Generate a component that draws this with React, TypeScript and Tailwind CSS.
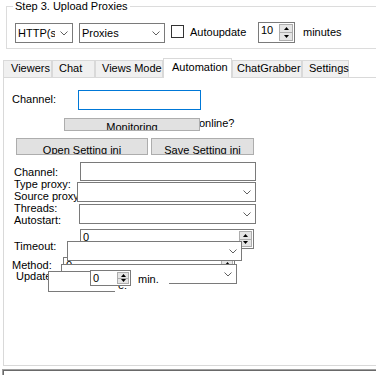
import React from 'react';

function Chevron() {
  return (
    <svg width="8" height="5" viewBox="0 0 8 5">
      <polyline points="0.5,0.5 4,4 7.5,0.5" fill="none" stroke="#606060" strokeWidth="1" />
    </svg>
  );
}

function Combo({ className, text }: { className: string; text?: string }) {
  return (
    <div className={`flex items-center border border-[#7a7a7a] bg-white ${className}`}>
      <span className="flex-1 overflow-hidden whitespace-nowrap pl-[2px]">{text}</span>
      <span className="flex w-[17px] shrink-0 justify-center">
        <Chevron />
      </span>
    </div>
  );
}

function Arrow({ up }: { up?: boolean }) {
  return (
    <svg width="5" height="3" viewBox="0 0 5 3">
      <polygon points={up ? '0,3 5,3 2.5,0' : '0,0 5,0 2.5,3'} fill="#000" />
    </svg>
  );
}

function Spinner({ className }: { className: string }) {
  return (
    <div className={`absolute top-[1px] bottom-[1px] flex flex-col ${className}`}>
      <div className="flex flex-1 items-center justify-center border border-[#adadad] bg-[#e5e5e5]">
        <Arrow up />
      </div>
      <div className="flex flex-1 items-center justify-center border border-t-0 border-[#adadad] bg-[#e5e5e5]">
        <Arrow />
      </div>
    </div>
  );
}

function Numeric({ className, value, spin }: { className: string; value: string; spin: string }) {
  return (
    <div className={`border border-[#7a7a7a] bg-white ${className}`}>
      <span className="block pl-[2px] pt-[1px]">{value}</span>
      <Spinner className={spin} />
    </div>
  );
}

const tabs = [
  { name: 'Viewers', w: 'w-[49px] pl-[7px]' },
  { name: 'Chat', w: 'w-[43px] pl-[6px]' },
  { name: 'Views Mode', w: 'w-[68px] pl-[6px]' },
  { name: 'Automation', w: 'w-[69px] pl-[8px]', active: true },
  { name: 'ChatGrabber', w: 'w-[70px] pl-[4px]' },
  { name: 'Settings', w: 'w-[47px] pl-[6px]' },
];

export default function App() {
  return (
    <div className="relative h-[375px] w-[376px] overflow-hidden bg-white pt-[6px] font-['Liberation_Sans',Arial,sans-serif] text-[11px] leading-[13px] text-black">
      {/* Step 3 group */}
      <div className="relative ml-[6px] h-[43px] w-[420px] border border-[#dcdcdc]">
        <span className="absolute -top-[7px] left-[6px] bg-white px-[2px]">Step 3. Upload Proxies</span>
        <div className="flex items-start pl-[8px] pt-[15px]">
          <Combo className="mt-[1px] h-[20px] w-[58px]" text="HTTP(s)" />
          <Combo className="ml-[6px] mt-[1px] h-[20px] w-[86px]" text="Proxies" />
          <div className="ml-[6px] mt-[3px] h-[13px] w-[13px] border border-[#333] bg-white" />
          <span className="ml-[6px] mt-[4px] w-[68px]">Autoupdate</span>
          <Numeric className="relative h-[21px] w-[37px]" value="10" spin="right-[1px] w-[14px]" />
          <span className="ml-[8px] mt-[4px]">minutes</span>
        </div>
      </div>

      {/* Tabs */}
      <div className="relative z-10 ml-[3px] mt-[9px] flex h-[19px] items-end">
        {tabs.map((t) =>
          t.active ? (
            <div key={t.name} className={`-mb-[1px] h-[20px] border border-b-0 border-[#d9d9d9] bg-white pt-[2px] ${t.w}`}>
              {t.name}
            </div>
          ) : (
            <div key={t.name} className={`h-[17px] whitespace-nowrap border border-b-0 border-[#d9d9d9] bg-[#f0f0f0] pt-[1px] ${t.w}`}>
              {t.name}
            </div>
          )
        )}
      </div>

      {/* Automation panel */}
      <div className="ml-[3px] flex h-[289px] w-[420px] flex-col border border-[#d9d9d9] bg-white pt-[12px]">
        {/* channel row */}
        <div className="flex items-start pl-[8px]">
          <span className="mt-[3px] w-[66px]">Channel:</span>
          <div className="h-[20px] w-[123px] border border-[#0078d7] bg-white" />
        </div>

        {/* monitoring row: button lies over the label */}
        <div className="ml-[60px] mt-[8px] flex items-start">
          <div className="relative z-10 h-[13px] w-[136px] overflow-hidden border border-[#adadad] bg-[#e1e1e1] pt-[2px] text-center">
            Monitoring
          </div>
          <span className="-ml-[1px] -mt-[1px]">online?</span>
        </div>

        {/* ini buttons */}
        <div className="mt-[7px] flex gap-[3px] pl-[12px]">
          <div className="h-[17px] w-[132px] overflow-hidden border border-[#adadad] bg-[#e1e1e1] pt-[5px] text-center">
            Open Setting ini
          </div>
          <div className="h-[17px] w-[103px] overflow-hidden border border-[#adadad] bg-[#e1e1e1] pt-[5px] text-center">
            Save Setting ini
          </div>
        </div>

        {/* settings block */}
        <div className="mt-[7px] flex">
          <div className="flex w-[69px] flex-col pl-[10px] pt-[4px] leading-[12px] whitespace-nowrap">
            <span>Channel:</span>
            <span>Type proxy:</span>
            <span>Source proxy:</span>
            <span>Threads:</span>
            <span>Autostart:</span>
            <span className="mt-[14px]">Timeout:</span>
            <span className="-ml-[2px] mt-[7px]">Method:</span>
            <span className="ml-[2px] -mt-[1px]">Update</span>
          </div>

          <div className="relative flex flex-col items-start">
            <div className="ml-[7px] h-[19px] w-[176px] border border-[#7a7a7a] bg-white" />
            <Combo className="ml-[4px] mt-[1px] h-[20px] w-[179px]" />
            <Combo className="ml-[6px] mt-[2px] h-[20px] w-[177px]" />

            {/* overlapping controls */}
            <div className="relative h-[70px] w-[190px]">
              <Numeric className="absolute left-[7px] top-[5px] h-[20px] w-[174px]" value="0" spin="right-[1px] w-[13px]" />
              <Numeric className="absolute -left-[10px] top-[33px] h-[20px] w-[172px]" value="0" spin="right-[1px] w-[12px]" />
              <Combo className="absolute -left-[6px] top-[17px] h-[20px] w-[175px]" />
              <Combo className="absolute -left-[12px] top-[40px] h-[20px] w-[176px]" />
              <div className="absolute -left-[25px] top-[47px] h-[21px] w-[67px] border border-r-0 border-[#7a7a7a] bg-white" />
              <span className="absolute left-[44px] top-[54px] h-[15px] w-[21px] bg-white pl-[1px] pt-[1px]">e:</span>
              <span className="absolute left-[61px] top-[49px] h-[15px] w-[35px] bg-white pl-[4px]">min.</span>
              <Numeric className="absolute left-[17px] top-[46px] h-[16px] w-[41px]" value="0" spin="right-[1px] w-[12px]" />
            </div>
          </div>
        </div>
      </div>

      {/* lower sunken control */}
      <div className="ml-[2px] mt-[3px] h-[10px] w-[420px] border-l border-t border-[#a0a0a0]">
        <div className="h-full border-l border-t border-[#696969]" />
      </div>
    </div>
  );
}
